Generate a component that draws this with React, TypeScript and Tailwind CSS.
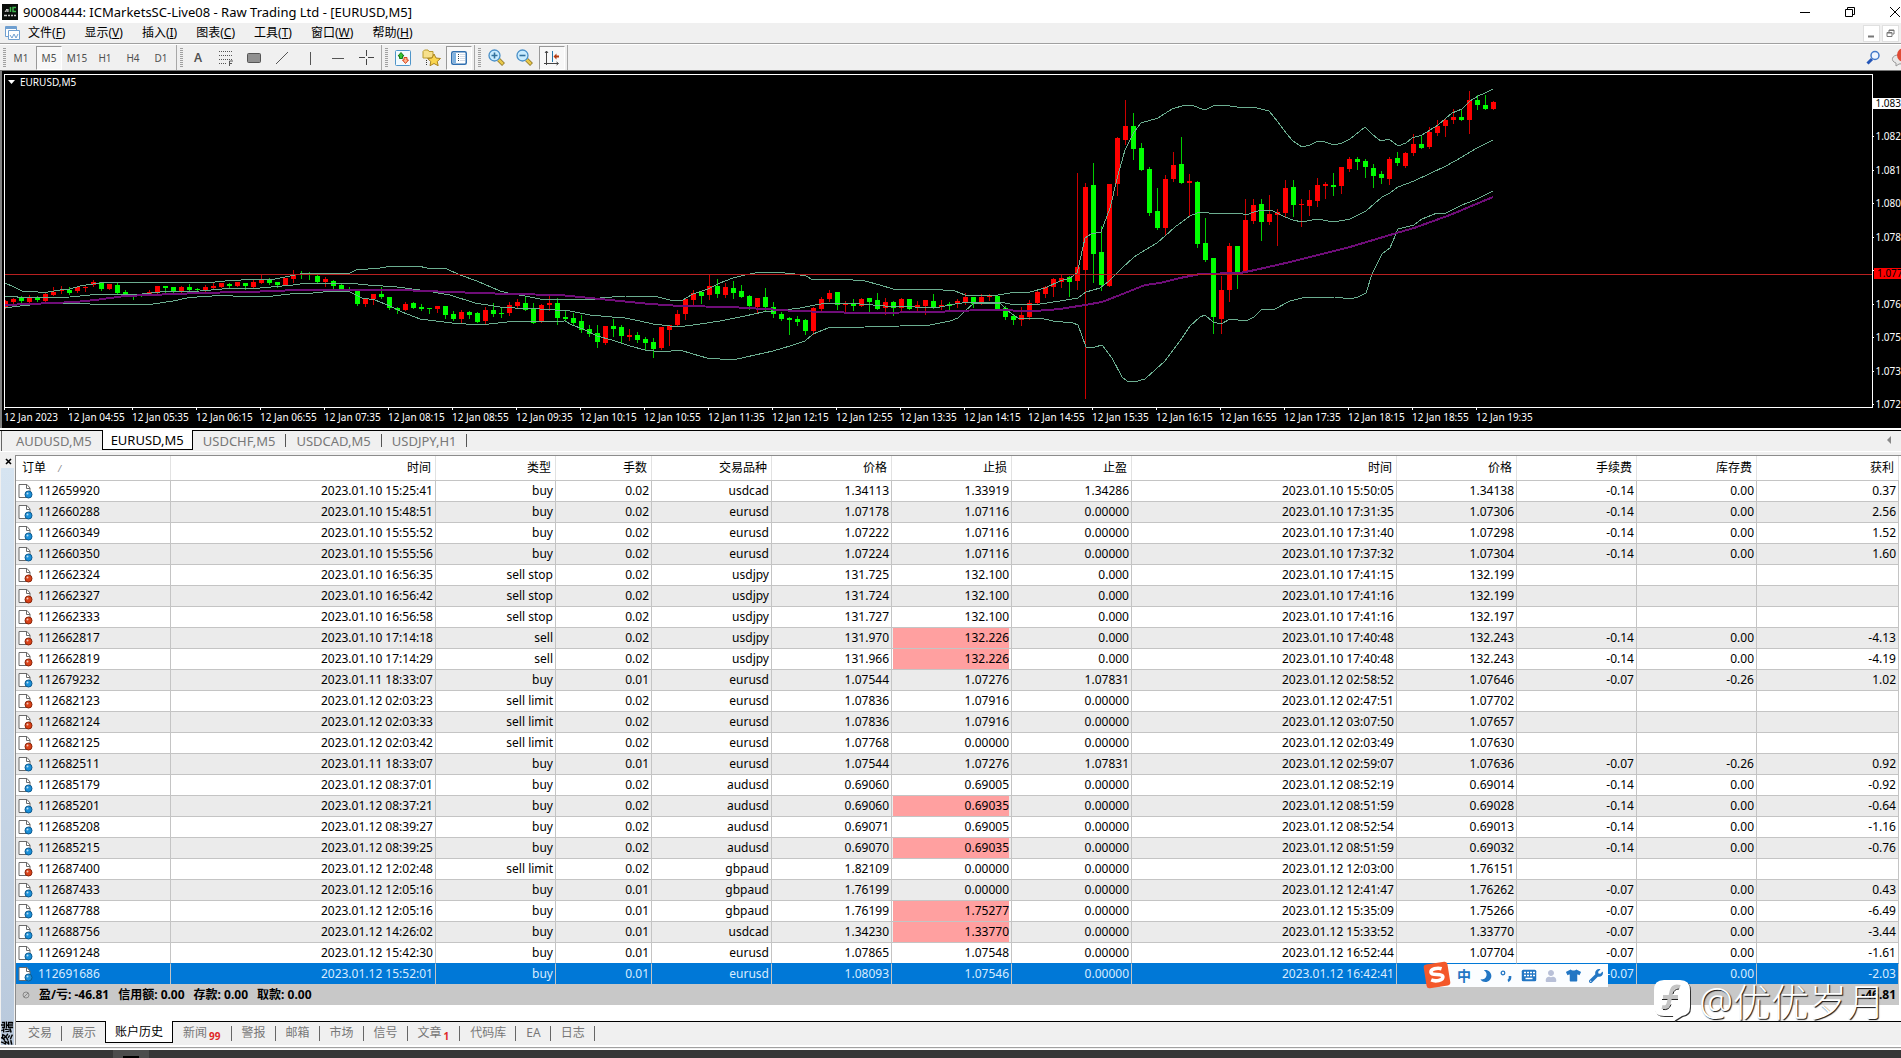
import React from "react";
import clsx from "clsx";
import { FaMoon, FaTshirt, FaUser, FaWrench } from "react-icons/fa";

type Candle = ["r" | "g", number, number, number, number];

// colour, high, body top, body bottom, low - one candle every 8px
const candles: Candle[] = [
  ["r", 300, 301, 307, 308], ["r", 298, 299, 302, 304], ["g", 296, 298, 301, 304], ["r", 295, 297, 302, 303],
  ["g", 296, 298, 300, 301], ["r", 293, 294, 301, 301], ["r", 287, 292, 295, 295], ["r", 286, 290, 291, 293],
  ["g", 287, 290, 293, 294], ["r", 287, 287, 291, 292], ["r", 286, 287, 288, 291], ["r", 280, 282, 285, 286],
  ["g", 282, 282, 289, 290], ["r", 284, 284, 289, 289], ["g", 283, 285, 293, 293], ["g", 290, 292, 295, 295],
  ["g", 294, 295, 296, 299], ["g", 294, 294, 295, 296], ["r", 290, 292, 294, 295], ["r", 286, 286, 293, 293],
  ["g", 286, 286, 288, 292], ["g", 287, 287, 292, 292], ["r", 286, 287, 292, 292], ["g", 284, 287, 290, 291],
  ["g", 288, 289, 290, 291], ["r", 285, 287, 291, 291], ["r", 283, 286, 288, 289], ["r", 283, 283, 287, 287],
  ["g", 283, 284, 286, 287], ["r", 282, 282, 286, 286], ["g", 283, 283, 286, 289], ["r", 280, 282, 287, 288],
  ["r", 275, 280, 283, 283], ["g", 278, 279, 283, 284], ["g", 282, 282, 285, 287], ["r", 278, 278, 285, 285],
  ["r", 270, 275, 279, 282], ["g", 271, 274, 275, 278], ["g", 272, 274, 275, 279], ["g", 275, 276, 282, 282],
  ["r", 277, 279, 282, 286], ["g", 280, 281, 286, 289], ["g", 283, 285, 289, 289], ["g", 287, 289, 290, 291],
  ["g", 291, 291, 304, 305], ["r", 299, 299, 304, 306], ["r", 294, 294, 299, 304], ["g", 287, 294, 297, 298],
  ["g", 297, 297, 308, 309], ["g", 307, 308, 310, 313], ["r", 302, 304, 310, 310], ["g", 302, 303, 308, 308],
  ["g", 304, 307, 309, 310], ["g", 308, 308, 309, 313], ["r", 306, 306, 309, 312], ["g", 306, 306, 315, 318],
  ["g", 311, 314, 319, 320], ["r", 310, 312, 319, 322], ["g", 311, 312, 315, 318], ["g", 312, 313, 322, 322],
  ["r", 307, 310, 321, 323], ["g", 303, 310, 314, 316], ["g", 308, 313, 314, 317], ["r", 302, 305, 313, 315],
  ["r", 299, 302, 306, 307], ["g", 297, 303, 310, 310], ["g", 303, 309, 323, 323], ["r", 304, 305, 322, 322],
  ["r", 296, 303, 305, 310], ["g", 298, 303, 318, 324], ["g", 311, 317, 319, 321], ["g", 313, 318, 323, 324],
  ["g", 315, 321, 330, 332], ["g", 325, 329, 334, 336], ["g", 325, 333, 342, 347], ["r", 326, 326, 343, 344],
  ["g", 319, 326, 329, 336], ["g", 325, 327, 336, 342], ["r", 329, 335, 337, 340], ["g", 332, 335, 340, 342],
  ["g", 337, 339, 343, 350], ["g", 338, 342, 349, 357], ["r", 327, 327, 348, 349], ["r", 325, 325, 330, 345],
  ["r", 310, 314, 325, 325], ["r", 299, 299, 314, 319], ["r", 290, 293, 300, 304], ["g", 292, 292, 296, 303],
  ["r", 275, 286, 295, 299], ["g", 279, 286, 294, 297], ["r", 283, 287, 295, 297], ["g", 281, 288, 293, 298],
  ["g", 285, 291, 297, 297], ["g", 295, 296, 306, 309], ["r", 298, 298, 307, 312], ["g", 288, 297, 307, 311],
  ["g", 302, 307, 314, 317], ["g", 312, 314, 319, 320], ["g", 317, 318, 320, 334], ["g", 316, 319, 322, 325],
  ["g", 319, 320, 331, 334], ["r", 307, 308, 331, 334], ["r", 297, 299, 309, 310], ["r", 290, 293, 299, 301],
  ["g", 292, 292, 305, 309], ["r", 301, 303, 305, 311], ["g", 299, 303, 306, 310], ["r", 298, 299, 306, 306],
  ["g", 298, 298, 302, 311], ["g", 293, 300, 309, 309], ["r", 298, 302, 308, 314], ["g", 301, 302, 308, 315],
  ["r", 298, 299, 308, 310], ["g", 299, 299, 309, 309], ["r", 301, 305, 308, 310], ["r", 300, 300, 306, 314],
  ["g", 294, 301, 308, 308], ["r", 300, 305, 307, 309], ["g", 302, 304, 306, 311], ["r", 299, 301, 304, 307],
  ["r", 293, 297, 302, 304], ["g", 297, 297, 304, 307], ["r", 294, 297, 303, 304], ["r", 294, 296, 297, 300],
  ["g", 296, 296, 309, 310], ["g", 306, 308, 317, 319], ["g", 314, 316, 320, 324], ["r", 307, 315, 320, 325],
  ["r", 300, 303, 317, 319], ["r", 291, 292, 303, 304], ["r", 286, 287, 294, 297], ["r", 278, 279, 287, 296],
  ["r", 275, 278, 282, 287], ["g", 276, 277, 282, 296], ["r", 173, 267, 281, 289], ["r", 183, 187, 270, 398],
  ["g", 163, 185, 254, 282], ["g", 226, 252, 285, 290], ["r", 184, 184, 286, 286], ["r", 137, 138, 184, 195],
  ["r", 100, 126, 140, 144], ["g", 113, 126, 149, 159], ["g", 143, 148, 170, 170], ["g", 167, 169, 213, 215],
  ["g", 188, 211, 228, 229], ["r", 175, 179, 228, 234], ["r", 152, 165, 179, 181], ["g", 137, 164, 183, 183],
  ["r", 174, 181, 183, 215], ["g", 181, 182, 244, 247], ["g", 218, 243, 260, 261], ["g", 258, 258, 317, 333],
  ["r", 276, 290, 319, 333], ["r", 243, 246, 290, 301], ["g", 246, 246, 272, 288], ["r", 199, 220, 271, 272],
  ["r", 199, 205, 221, 223], ["g", 199, 204, 222, 240], ["r", 195, 214, 222, 224], ["r", 209, 212, 215, 245],
  ["r", 180, 188, 213, 216], ["g", 180, 187, 205, 216], ["r", 199, 204, 205, 226], ["r", 190, 200, 206, 215],
  ["r", 178, 185, 201, 206], ["r", 182, 184, 186, 198], ["g", 173, 185, 187, 195], ["r", 167, 167, 186, 193],
  ["r", 157, 159, 169, 171], ["g", 157, 159, 162, 169], ["g", 159, 161, 167, 177], ["g", 164, 168, 176, 187],
  ["g", 171, 174, 178, 183], ["r", 157, 159, 179, 184], ["g", 152, 158, 163, 165], ["r", 152, 153, 166, 167],
  ["r", 134, 144, 153, 155], ["g", 135, 144, 148, 148], ["r", 127, 132, 147, 148], ["r", 120, 126, 133, 135],
  ["r", 119, 120, 126, 136], ["r", 109, 117, 120, 123], ["g", 109, 117, 120, 120], ["r", 91, 100, 120, 133],
  ["g", 95, 100, 105, 109], ["g", 95, 105, 109, 109], ["r", 101, 102, 109, 109],
];

const upperBand =
  "5,283 14,287 22,291 38,292 48,292 60,290 70,289 80,286 93,284 107,282 190,282 205,283 225,281 258,279 275,279 295,275 305,273 350,273 356,270 380,268 392,266 418,266 427,268 447,269 460,275 477,281 500,291 512,294 525,296 540,299 550,300 560,299 590,300 600,298 612,297 625,296 658,297 670,300 677,301 683,300 693,294 708,289 720,283 733,278 745,275 755,273 775,272 795,274 806,276 813,280 840,279 865,281 880,285 893,289 915,290 930,289 955,291 965,295 998,295 1010,293 1030,292 1045,288 1060,281 1070,278 1077,273 1079,265 1085,238 1091,234 1101,232 1110,208 1118,175 1125,150 1134,132 1141,123 1158,118 1172,109 1185,105 1191,105 1205,110 1213,106 1222,105 1237,107 1245,108 1253,107 1269,111 1278,122 1286,133 1293,141 1302,147 1310,145 1318,141 1325,142 1334,145 1342,143 1350,139 1365,127 1373,135 1381,141 1389,139 1398,146 1406,143 1412,138 1422,135 1438,125 1452,113 1462,109 1470,101 1478,96 1485,93 1493,89";
const middleBand =
  "5,296 30,298 70,297 90,295 110,294 133,295 160,292 200,291 233,288 260,288 293,285 307,283 347,283 368,285 397,287 427,291 450,295 475,303 500,307 515,308 540,309 570,311 590,315 612,317 625,318 640,321 653,324 670,326 678,327 700,324 720,321 745,316 763,312 785,310 800,308 815,305 828,303 860,304 885,306 915,307 940,307 955,304 970,302 1000,302 1010,304 1025,305 1040,304 1060,301 1078,298 1086,292 1100,288 1109,281 1122,268 1134,257 1145,250 1157,243 1165,236 1175,227 1190,216 1197,213 1205,212 1213,214 1240,213 1246,215 1254,212 1262,210 1273,211 1285,217 1293,220 1302,222 1317,219 1334,222 1350,219 1366,211 1382,197 1390,193 1398,187 1414,181 1446,166 1462,157 1477,148 1493,140";
const lowerBand =
  "5,308 20,306 40,304 67,303 90,304 153,304 160,303 173,301 187,298 197,297 227,295 233,296 273,296 290,294 313,293 333,291 350,292 362,298 375,300 390,306 402,312 420,319 452,323 480,325 507,322 565,321 572,325 583,329 597,336 612,340 630,346 645,350 663,352 680,350 693,354 707,358 733,360 755,355 773,351 790,346 805,341 813,334 828,328 865,327 900,326 930,325 950,321 958,318 965,311 974,303 1000,303 1008,311 1018,318 1040,318 1053,321 1073,323 1078,325 1086,347 1095,347 1102,345 1112,358 1122,377 1127,381 1134,382 1145,379 1165,361 1180,341 1190,326 1200,317 1205,315 1213,322 1221,324 1230,319 1246,321 1254,317 1262,309 1275,309 1290,301 1302,298 1335,297 1350,299 1358,297 1366,293 1372,274 1382,254 1390,248 1398,229 1414,225 1422,219 1437,213 1446,213 1462,205 1475,200 1493,191";
const movingAverage =
  "5,305 30,304 75,302 95,300 125,296 150,295 200,293 280,291 290,290 400,290 450,292 510,294 560,295 580,297 620,301 650,304 680,306 730,307 765,309 795,311 860,313 940,312 950,311 990,310 1035,311 1060,309 1085,305 1102,302 1120,295 1145,285 1160,283 1180,278 1200,274 1240,273 1255,270 1290,262 1350,247 1400,232 1414,228 1450,215 1493,197";

const timeLabels = ["12 Jan 2023"].concat(
  Array.from({ length: 23 }, (_, i) => {
    const m = 295 + i * 40;
    const pad = (n: number) => String(n).padStart(2, "0");
    return `12 Jan ${pad(Math.floor(m / 60))}:${pad(m % 60)}`;
  })
);

const prices = ["1.083", "1.082", "1.081", "1.080", "1.078", "1.077", "1.076", "1.075", "1.073", "1.072"];

const menus = [
  ["文件", "F"], ["显示", "V"], ["插入", "I"], ["图表", "C"], ["工具", "T"], ["窗口", "W"], ["帮助", "H"],
];

const columns = [
  { name: "订单", width: "w-[155px]" },
  { name: "时间", width: "w-[265px]" },
  { name: "类型", width: "w-[120px]" },
  { name: "手数", width: "w-[96px]" },
  { name: "交易品种", width: "w-[120px]" },
  { name: "价格", width: "w-[120px]" },
  { name: "止损", width: "w-[120px]" },
  { name: "止盈", width: "w-[120px]" },
  { name: "时间", width: "w-[265px]" },
  { name: "价格", width: "w-[120px]" },
  { name: "手续费", width: "w-[120px]" },
  { name: "库存费", width: "w-[120px]" },
  { name: "获利", width: "" },
];

// order | open time | type | lots | symbol | price | s/l | t/p | close time | price | commission | swap | profit
const orders = `112659920|2023.01.10 15:25:41|buy|0.02|usdcad|1.34113|1.33919|1.34286|2023.01.10 15:50:05|1.34138|-0.14|0.00|0.37
112660288|2023.01.10 15:48:51|buy|0.02|eurusd|1.07178|1.07116|0.00000|2023.01.10 17:31:35|1.07306|-0.14|0.00|2.56
112660349|2023.01.10 15:55:52|buy|0.02|eurusd|1.07222|1.07116|0.00000|2023.01.10 17:31:40|1.07298|-0.14|0.00|1.52
112660350|2023.01.10 15:55:56|buy|0.02|eurusd|1.07224|1.07116|0.00000|2023.01.10 17:37:32|1.07304|-0.14|0.00|1.60
112662324|2023.01.10 16:56:35|sell stop|0.02|usdjpy|131.725|132.100|0.000|2023.01.10 17:41:15|132.199|||
112662327|2023.01.10 16:56:42|sell stop|0.02|usdjpy|131.724|132.100|0.000|2023.01.10 17:41:16|132.199|||
112662333|2023.01.10 16:56:58|sell stop|0.02|usdjpy|131.727|132.100|0.000|2023.01.10 17:41:16|132.197|||
112662817|2023.01.10 17:14:18|sell|0.02|usdjpy|131.970|132.226*|0.000|2023.01.10 17:40:48|132.243|-0.14|0.00|-4.13
112662819|2023.01.10 17:14:29|sell|0.02|usdjpy|131.966|132.226*|0.000|2023.01.10 17:40:48|132.243|-0.14|0.00|-4.19
112679232|2023.01.11 18:33:07|buy|0.01|eurusd|1.07544|1.07276|1.07831|2023.01.12 02:58:52|1.07646|-0.07|-0.26|1.02
112682123|2023.01.12 02:03:23|sell limit|0.02|eurusd|1.07836|1.07916|0.00000|2023.01.12 02:47:51|1.07702|||
112682124|2023.01.12 02:03:33|sell limit|0.02|eurusd|1.07836|1.07916|0.00000|2023.01.12 03:07:50|1.07657|||
112682125|2023.01.12 02:03:42|sell limit|0.02|eurusd|1.07768|0.00000|0.00000|2023.01.12 02:03:49|1.07630|||
112682511|2023.01.11 18:33:07|buy|0.01|eurusd|1.07544|1.07276|1.07831|2023.01.12 02:59:07|1.07636|-0.07|-0.26|0.92
112685179|2023.01.12 08:37:01|buy|0.02|audusd|0.69060|0.69005|0.00000|2023.01.12 08:52:19|0.69014|-0.14|0.00|-0.92
112685201|2023.01.12 08:37:21|buy|0.02|audusd|0.69060|0.69035*|0.00000|2023.01.12 08:51:59|0.69028|-0.14|0.00|-0.64
112685208|2023.01.12 08:39:27|buy|0.02|audusd|0.69071|0.69005|0.00000|2023.01.12 08:52:54|0.69013|-0.14|0.00|-1.16
112685215|2023.01.12 08:39:25|buy|0.02|audusd|0.69070|0.69035*|0.00000|2023.01.12 08:51:59|0.69032|-0.14|0.00|-0.76
112687400|2023.01.12 12:02:48|sell limit|0.02|gbpaud|1.82109|0.00000|0.00000|2023.01.12 12:03:00|1.76151|||
112687433|2023.01.12 12:05:16|buy|0.01|gbpaud|1.76199|0.00000|0.00000|2023.01.12 12:41:47|1.76262|-0.07|0.00|0.43
112687788|2023.01.12 12:05:16|buy|0.01|gbpaud|1.76199|1.75277*|0.00000|2023.01.12 15:35:09|1.75266|-0.07|0.00|-6.49
112688756|2023.01.12 14:26:02|buy|0.01|usdcad|1.34230|1.33770*|0.00000|2023.01.12 15:33:52|1.33770|-0.07|0.00|-3.44
112691248|2023.01.12 15:42:30|buy|0.01|eurusd|1.07865|1.07548|0.00000|2023.01.12 16:52:44|1.07704|-0.07|0.00|-1.61
112691686|2023.01.12 15:52:01|buy|0.01|eurusd|1.08093|1.07546|0.00000|2023.01.12 16:42:41||-0.07|0.00|-2.03`
  .split("\n")
  .map((line) => line.split("|"));

const bottomTabs: { name: string; badge?: string; active?: boolean }[] = [
  { name: "交易" }, { name: "展示" }, { name: "账户历史", active: true }, { name: "新闻", badge: "99" },
  { name: "警报" }, { name: "邮箱" }, { name: "市场" }, { name: "信号" }, { name: "文章", badge: "1" },
  { name: "代码库" }, { name: "EA" }, { name: "日志" },
];

const TitleBar = () => (
  <header className="flex h-[23px] items-center overflow-hidden bg-white pl-[2px]">
    <svg width="16" height="16" className="shrink-0">
      <rect width="16" height="16" fill="#0b0f0c" />
      <path d="M3 8l2-3v3M6 8V5" stroke="#ddd" fill="none" />
      <path d="M8.500 3v5M14 3.500h-3v4h3" stroke="#3db54a" strokeWidth="1.500" fill="none" />
      <path d="M2 11.500h3m1 0h2m1 0h2m1 0h2" stroke="#ccc" strokeWidth="1.500" />
    </svg>
    <h1 className="ml-[5px] flex-1 text-[13px] whitespace-nowrap">
      90008444: ICMarketsSC-Live08 - Raw Trading Ltd - [EURUSD,M5]
    </h1>
    <div className="flex items-center gap-[33px]">
      <button aria-label="Minimize">
        <svg width="12" height="12"><path d="M1 6.500h10" stroke="#000" /></svg>
      </button>
      <button aria-label="Restore">
        <svg width="12" height="12" fill="none" stroke="#000"><path d="M1.500 3.500h7v7h-7zM3.500 3.500v-2h7v7h-2" /></svg>
      </button>
      <button aria-label="Close">
        <svg width="12" height="12"><path d="M1 1l10 10M11 1L1 11" stroke="#000" /></svg>
      </button>
    </div>
  </header>
);

const MenuBar = () => (
  <nav className="flex h-[21px] items-center border-b border-[#a0a0a0] bg-[#f0f0f0] pl-[5px]">
    <svg width="15" height="15" fill="#fff" stroke="#6f9fd0">
      <path d="M.5.500h11v10H.5z" />
      <path d="M.5 2h11" strokeWidth="2" />
      <path d="M3.500 4.500h11v9h-11z" />
      <path d="M5 9l2 3 2-4 2 4 2-4" fill="none" />
    </svg>
    <div className="ml-[8px] flex flex-1 gap-[19px]">
      {menus.map(([name, key]) => (
        <button key={key} className="whitespace-nowrap">
          {name}(<u>{key}</u>)
        </button>
      ))}
    </div>
    <div className="mr-[2px] flex gap-[2px]">
      <button aria-label="Minimize chart" className="h-[17px] w-[17px] border border-[#e0e0e0] bg-white">
        <svg width="15" height="15"><path d="M4 10.500h6" stroke="#777" strokeWidth="2" /></svg>
      </button>
      <button aria-label="Restore chart" className="h-[17px] w-[17px] border border-[#e0e0e0] bg-white">
        <svg width="15" height="15" fill="none" stroke="#777"><path d="M4 6.500h5v4H4zM6 6V4h5v4H9.500M4 7h5M6 4.500h5" /></svg>
      </button>
    </div>
  </nav>
);

const ToolGroup = ({ children }: { children: React.ReactNode }) => (
  <div className="flex items-center border-r border-[#a8a8a8] pr-px pl-[3px]">
    <span className="mr-px h-[20px] w-[3px] bg-[repeating-linear-gradient(#a0a0a0_0_1px,#f0f0f0_1px_2px)]" />
    {children}
  </div>
);

const Tool = ({ label, pressed, children }: { label: string; pressed?: boolean; children: React.ReactNode }) => (
  <button
    aria-label={label}
    aria-pressed={pressed}
    className={clsx(
      "mx-px flex h-[24px] w-[26px] items-center justify-center border text-[10px] text-[#505050]",
      pressed ? "border-[#fff] border-t-[#999] border-l-[#999] bg-[#f8f8f8]" : "border-transparent"
    )}
  >
    {children}
  </button>
);

const Magnifier = ({ plus }: { plus?: boolean }) => (
  <svg width="17" height="17">
    <path d="M10.500 10.500l5 5" stroke="#8a7326" strokeWidth="4" />
    <path d="M10.500 10.500l4.500 4.500" stroke="#e8c84a" strokeWidth="2.500" />
    <circle cx="6.500" cy="6.500" r="5.500" fill="#c9ecff" stroke="#4a90c8" strokeWidth="1.300" />
    <path d={plus ? "M3.500 6.500h6M6.500 3.500v6" : "M3.500 6.500h6"} stroke="#33729e" strokeWidth="1.600" />
  </svg>
);

const Toolbar = () => (
  <div className="flex h-[27px] items-stretch overflow-hidden border-t border-b border-t-white border-b-[#777] bg-[#f0f0f0]">
    <ToolGroup>
      {["M1", "M5", "M15", "H1", "H4", "D1"].map((tf) => (
        <Tool key={tf} label={tf} pressed={tf === "M5"}>{tf}</Tool>
      ))}
    </ToolGroup>
    <ToolGroup>
      <Tool label="Text"><span className="text-[12px] font-semibold">A</span></Tool>
      <Tool label="Fibonacci">
        <svg width="16" height="18" stroke="#555" fill="none">
          <path d="M1 2.500h13M1 6.500h13M1 10.500h13M1 14.500h8" strokeDasharray="1 1" />
          <path d="M11.500 17v-5H15M11.500 14.500H14" />
        </svg>
      </Tool>
      <Tool label="Rectangle">
        <svg width="14" height="10"><rect x=".5" y=".5" width="13" height="9" rx="1" fill="#909090" stroke="#555" /></svg>
      </Tool>
      <Tool label="Trend line"><svg width="14" height="14"><path d="M1 13L13 1" stroke="#555" /></svg></Tool>
      <Tool label="Vertical line"><svg width="14" height="14"><path d="M7.500 1v13" stroke="#555" /></svg></Tool>
      <Tool label="Horizontal line"><svg width="14" height="14"><path d="M1 7.500h12" stroke="#555" /></svg></Tool>
      <Tool label="Crosshair">
        <svg width="15" height="15"><path d="M0 7.500h6M9 7.500h6M7.500 0v6M7.500 9v6" stroke="#444" /></svg>
      </Tool>
    </ToolGroup>
    <ToolGroup>
      <Tool label="Market watch">
        <svg width="16" height="16" strokeLinejoin="round">
          <rect x=".5" y=".5" width="15" height="15" rx="1" fill="#f2faff" stroke="#4f95c9" />
          <path d="M6 2.500L9 6H7.500v2.500h-3V6H3z" fill="#35c435" stroke="#167a16" />
          <path d="M10.500 13.500l3-3.500H12V7.500H9V10H7.500z" fill="#ffb08a" stroke="#d8451c" />
        </svg>
      </Tool>
      <Tool label="Navigator">
        <svg width="19" height="17" className="shrink-0">
          <path d="M1 9V2.500L2.500 1H6l1 1.500h4V9z" fill="#f7e08b" stroke="#b99a2e" />
          <path d="M4.500 11v5" stroke="#333" strokeDasharray="1 1" />
          <path d="M12 5l2 4 4.500.5-3.300 3 1 4.200L12 14.500l-4 2.200.8-4.200-3.200-3L10 9z" fill="#fbd64e" stroke="#a8821f" />
        </svg>
      </Tool>
      <Tool label="Terminal" pressed>
        <svg width="16" height="14">
          <rect x=".75" y=".75" width="14.500" height="12.500" rx="1.500" fill="#fff" stroke="#2f6fb0" strokeWidth="1.500" />
          <rect x="2" y="2" width="3" height="10" fill="#7fb2e0" />
          <path d="M7.500 3v8" stroke="#345" strokeDasharray="1 1" />
          <path d="M9 3.500h5M9 5.500h5M9 7.500h5M9 9.500h5" stroke="#d5dde8" />
        </svg>
      </Tool>
    </ToolGroup>
    <ToolGroup>
      <Tool label="Zoom in"><Magnifier plus /></Tool>
      <Tool label="Zoom out"><Magnifier /></Tool>
      <Tool label="Chart shift" pressed>
        <svg width="16" height="16" fill="none">
          <path d="M2.500 1v14M0 13.500h14M1 3l1.500-2L4 3M12.500 12l2 1.500-2 1.500" stroke="#444" />
          <path d="M8.500 1v11" stroke="#2277aa" />
          <path d="M9.500 6.500l3-3v2H15v2h-2.500v2z" fill="#b33c12" />
        </svg>
      </Tool>
    </ToolGroup>
    <div className="-mr-[8px] ml-auto flex items-center gap-[10px]">
      <button aria-label="Search">
        <svg width="15" height="15" fill="none">
          <path d="M6 9l-4.500 4.500" stroke="#2456b8" strokeWidth="3" />
          <circle cx="9" cy="5.500" r="4" fill="#eef5ff" stroke="#4178c8" strokeWidth="1.500" />
        </svg>
      </button>
      <button aria-label="Messages">
        <svg width="18" height="20">
          <path d="M7 7c4 0 7 2 7 5s-3 4-6 4l-3 2v-3c-6-2-4-8 2-8z" fill="#e8e8e8" stroke="#999" />
          <circle cx="13" cy="7" r="7" fill="#e04a34" />
        </svg>
      </button>
    </div>
  </div>
);

const Chart = () => (
  <section className="border-l-2 border-[#808080] bg-black pt-[3px] pl-[2px] text-[10px] leading-[14px] text-white">
    <div className="flex">
      <div className="relative h-[334px] min-w-0 flex-1 border border-white">
        <svg width="100%" height="332" className="block" shapeRendering="crispEdges">
          <g transform="translate(-5 -75)">
            {candles.map(([color, high, top, bottom, low], i) => (
              <g key={i} fill={color === "r" ? "#f00" : "#0f0"}>
                <rect x={5 + i * 8} y={high} width="1" height={low - high + 1} opacity=".8" />
                <rect x={3 + i * 8} y={top} width="5" height={Math.max(bottom - top, 1)} />
              </g>
            ))}
            <g fill="none" stroke="#6cae90">
              <polyline points={upperBand} />
              <polyline points={middleBand} />
              <polyline points={lowerBand} />
            </g>
            <polyline points={movingAverage} fill="none" stroke="#6f0d78" strokeWidth="2" />
          </g>
          <rect x="0" y="199" width="100%" height="1" fill="#b82020" />
        </svg>
        <div className="absolute top-0 left-[3px] flex items-center gap-[5px]">
          <svg width="7" height="4"><path d="M0 0h7L3.500 4z" fill="#fff" /></svg>
          EURUSD,M5
        </div>
      </div>
      <ul className="flex h-[338px] w-[28px] flex-col justify-between overflow-hidden pt-[22px]">
        {prices.map((price, i) => (
          <li key={price} className={clsx("relative flex h-[14px] items-center", i === 0 && "text-black")}>
            <span className="h-px w-[2px] bg-white" />
            {price === "1.077" ? (
              <span className="absolute top-[4px] right-0 left-[1px] bg-[#f00] pl-[3px] leading-[11px] text-black">
                {price}
              </span>
            ) : (
              <span className={clsx("flex-1 pl-[2px] leading-[11px]", i === 0 && "bg-white")}>{price}</span>
            )}
          </li>
        ))}
      </ul>
    </div>
    <ol className="-mt-[4px] flex h-[20px]">
      {timeLabels.map((label) => (
        <li key={label} className="w-[64px] shrink-0 whitespace-nowrap">
          <span className="block h-[2px] w-px bg-white" />
          {label}
        </li>
      ))}
    </ol>
  </section>
);

const ChartTabs = () => (
  <div className="flex h-[21px] border-t border-black bg-[#f0f0f0] text-[13px] text-[#777]">
    <span className="w-[2px] border-r border-[#666]" />
    {["AUDUSD,M5", "EURUSD,M5", "USDCHF,M5", "USDCAD,M5", "USDJPY,H1"].map((tab, i) => (
      <React.Fragment key={tab}>
        <button
          className={clsx(
            i === 0 && "pr-[10px] pl-[14px]",
            i === 1
              ? "-mt-px h-[20px] border border-t-0 border-black bg-white px-[8px] leading-[20px] text-black"
              : "h-[19px] leading-[18px]",
            i > 1 && "px-[10px]"
          )}
        >
          {tab}
        </button>
        {i > 1 && <span className="mt-[3px] h-[13px] w-px bg-[#555]" />}
      </React.Fragment>
    ))}
    <svg width="4" height="8" className="mt-[5px] mr-[10px] ml-auto"><path d="M4 0v8L0 4z" fill="#888" /></svg>
  </div>
);

const OrderIcon = ({ sell }: { sell: boolean }) => (
  <svg width="15" height="16" className="shrink-0">
    <path d="M1 1.500h8l3 3.500v9.500H1z" fill="#fff" stroke="#6a6a6a" />
    <path d="M8.500 1.500V5.500H12" fill="none" stroke="#6a6a6a" />
    <circle cx="10.500" cy="11.500" r="3.500" fill={sell ? "#d9431a" : "#1c90d8"} stroke={sell ? "#8a2408" : "#0c5a90"} />
    <circle cx="9.500" cy="10.500" r="1" fill="#fff" opacity=".7" />
  </svg>
);

const History = () => (
  <table className="w-full table-fixed border-separate border-spacing-0 bg-white text-right whitespace-nowrap">
    <thead>
      <tr>
        {columns.map(({ name, width }, i) => (
          <th
            key={i}
            className={clsx(
              "h-[24px] border-r border-[#e2e2e2] p-0 font-normal",
              width,
              i === 0 ? "pl-[6px] text-left" : "pr-[4px]"
            )}
          >
            {name}
            {i === 0 && <span className="ml-[12px] text-[9px] text-[#888] italic">/</span>}
          </th>
        ))}
      </tr>
    </thead>
    <tbody>
      {orders.map((cells, row) => {
        const selected = row === orders.length - 1;
        return (
          <tr key={cells[0]} className={clsx(selected ? "bg-[#0078d7] text-[#d8ecff]" : row % 2 === 1 && "bg-[#ebebeb]")}>
            {cells.map((cell, i) => (
              <td
                key={i}
                className={clsx(
                  "h-[21px] border-t border-r border-r-[#c4c4c4] p-0 leading-[20px]",
                  selected ? "border-t-[#0078d7]" : "border-t-[#c4c4c4]",
                  i > 0 && "pr-[2px]"
                )}
              >
                {i === 0 ? (
                  <span className="flex items-center gap-[5px] pl-[2px]">
                    <OrderIcon sell={cells[2].startsWith("sell")} />
                    {cell}
                  </span>
                ) : cell.endsWith("*") ? (
                  <span className="ml-px block bg-[#ffa0a0]">{cell.slice(0, -1)}</span>
                ) : (
                  cell
                )}
              </td>
            ))}
          </tr>
        );
      })}
    </tbody>
    <tfoot>
      <tr className="bg-[#c8c8c8] font-bold">
        <td colSpan={12} className="h-[21px] p-0 text-left">
          <span className="flex items-center gap-[9px] pl-[6px]">
            <svg width="8" height="8" fill="none" stroke="#888"><circle cx="4" cy="4" r="3" /><path d="M2 6l4-4" /></svg>
            <span>盈/亏: -46.81</span>
            <span>信用额: 0.00</span>
            <span>存款: 0.00</span>
            <span>取款: 0.00</span>
          </span>
        </td>
        <td className="h-[21px] p-0 pr-[3px]">-46.81</td>
      </tr>
    </tfoot>
  </table>
);

const BottomTabs = () => (
  <div className="flex h-[24px] border-t border-black bg-[#f0f0f0] text-[#777]">
    {bottomTabs.map(({ name, badge, active }, i) => (
      <React.Fragment key={name}>
        <button
          className={clsx(
            "flex items-center leading-[20px]",
            active
              ? "-mt-px h-[22px] border border-t-0 border-black bg-white px-[9px] text-black"
              : "h-[21px] pl-[10px]",
            !active && (badge ? "pr-[10px]" : "pr-[9px]"),
            i === 0 && "pl-[12px]"
          )}
        >
          {name}
          {badge && <span className="ml-[2px] self-end text-[10px] leading-[13px] font-bold text-[#e02828]">{badge}</span>}
        </button>
        {!active && i !== 1 && <span className="mt-[4px] h-[15px] w-px bg-[#666]" />}
      </React.Fragment>
    ))}
  </div>
);

const InputMethodBar = () => (
  <div className="absolute right-[293px] bottom-[71px] flex h-[23px] w-[168px] items-center justify-between bg-[#fbfdff] pr-[5px] pl-[17px] text-[#2276c4]">
    <svg width="28" height="28" className="absolute -top-[3px] -left-[17px]">
      <g transform="rotate(-9 14 14)">
        <rect x="2" y="2" width="24" height="24" rx="3" fill="#f4582a" />
        <path d="M19.500 8.500c-4-2-11-1.500-11 2 0 4 11 2 11 6 0 4-8 4-12 1.500" fill="none" stroke="#fff" strokeWidth="3.600" />
      </g>
    </svg>
    <span className="text-[14px] font-bold">中</span>
    <FaMoon size={12} className="-scale-x-100" />
    <svg width="12" height="14" fill="none" stroke="currentColor">
      <circle cx="3" cy="4" r="1.800" strokeWidth="1.300" />
      <path d="M10 7v2q0 2-2 3" strokeWidth="2.600" />
    </svg>
    <svg width="16" height="13">
      <rect x=".75" y=".75" width="14.500" height="11.500" rx="1.500" fill="currentColor" />
      <path d="M3 3.500h11M3 6.500h11" stroke="#fff" strokeWidth="1.500" strokeDasharray="2 1" />
      <path d="M4.500 9.500h7" stroke="#fff" strokeWidth="1.500" />
    </svg>
    <FaUser size={12} className="text-[#b8c0d8]" />
    <FaTshirt size={15} />
    <FaWrench size={14} />
  </div>
);

const Watermark = () => (
  <div className="absolute right-[16px] bottom-[36px] flex items-center gap-[8px] text-white">
    <svg width="38" height="42" className="drop-shadow-[1px_1px_0_#333]">
      <path d="M11 0h16q10 0 10 10v17q0 8-8 9l-8 5-1-5h-9Q1 36 1 26V10Q1 0 11 0z" fill="#fff" />
      <path d="M27 7c-6-2-8 1-9 7l-2 8c-1 5-3 6-7 5M10 17h15" fill="none" stroke="#c4c4c4" strokeWidth="4" />
      <path d="M9 19.500h5.500M18.500 19.500h6.500M20 14q1-5 6-5M10 29.500q6 1 8-5" fill="none" stroke="#222" />
    </svg>
    <span className="text-[38px] leading-[40px] font-light [text-shadow:1px_1px_1px_#111]">@优优岁月</span>
  </div>
);

export default function App() {
  return (
    <div className="relative flex min-h-screen flex-col overflow-hidden bg-[#f0f0f0] font-['Noto_Sans','Noto_Sans_CJK_SC',sans-serif] text-[12px] leading-[18px] text-black">
      <TitleBar />
      <MenuBar />
      <Toolbar />
      <Chart />
      <div className="h-[2px] bg-white" />
      <ChartTabs />
      <div className="flex flex-1 border-t border-white pt-[3px]">
        <aside className="flex w-[15px] flex-col bg-[#f0f0f0] pl-px">
          <button aria-label="Close panel" className="flex h-[13px] items-center justify-center">
            <svg width="7" height="7"><path d="M1 1l5 5M6 1L1 6" stroke="#000" strokeWidth="1.600" /></svg>
          </button>
          <div className="mr-px flex flex-1 flex-col justify-end bg-linear-to-b from-[#d6e4f1] to-[#b9c9dc]">
            <span className="rotate-180 self-center text-[12px] leading-[13px] font-bold [text-orientation:sideways] [writing-mode:vertical-rl]">
              终端
            </span>
          </div>
        </aside>
        <main className="flex min-w-0 flex-1 flex-col border-t border-l border-[#8c8c8c] bg-white">
          <div className="flex-1 bg-white pr-[2px]">
            <History />
          </div>
          <BottomTabs />
        </main>
      </div>
      <div className="h-[5px] border-t-2 border-b border-white bg-[#a0a0a0] shadow-[inset_0_-1px_0_#f0f0f0]" />
      <footer className="h-[8px] overflow-hidden bg-[#363636]">
        <div className="ml-[113px] h-full w-[36px] bg-[#4c4c4c] px-[10px] pt-[6px]">
          <div className="h-[2px] bg-black" />
        </div>
      </footer>
      <InputMethodBar />
      <Watermark />
    </div>
  );
}
